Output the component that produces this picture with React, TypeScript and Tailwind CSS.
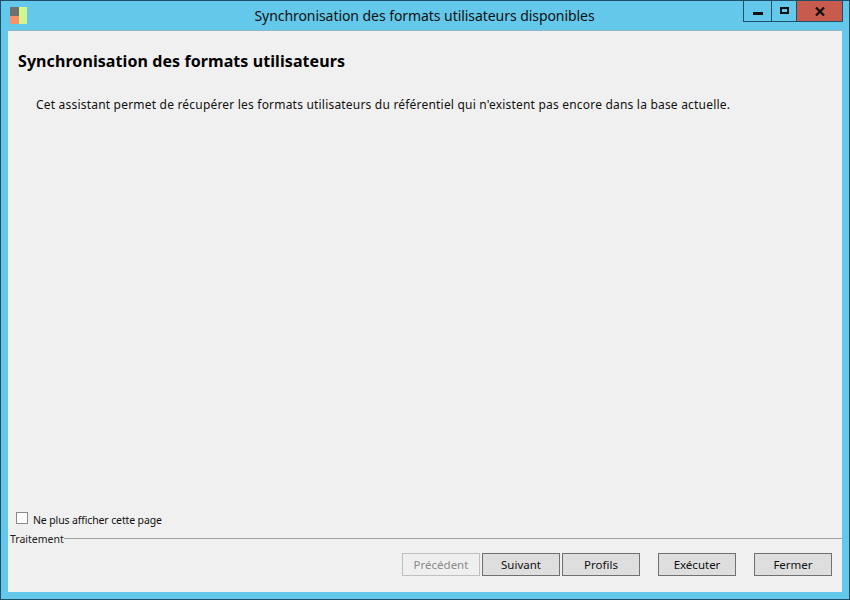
import { ReactNode } from 'react';

function DlgButton({ children, disabled }: { children: ReactNode; disabled?: boolean }) {
  return (
    <button
      className={
        disabled
          ? 'w-[78px] h-[23px] border border-[#bfbfbf] bg-[#efefef] text-[#8a8a8a] text-[11.5px]'
          : 'w-[78px] h-[23px] border border-[#707070] bg-[#dedede] text-[#111111] text-[11.5px]'
      }
    >
      {children}
    </button>
  );
}

export default function App() {
  return (
    <div className="w-[850px] h-[600px] flex flex-col bg-[#63c8ea] border border-[#1d4f6b] font-['Noto_Sans',sans-serif] overflow-hidden">
      {/* title bar */}
      <div className="relative h-[29px] shrink-0 flex items-center justify-center">
        <svg className="absolute left-[9px] top-[6px]" width="17" height="17" viewBox="0 0 17 17">
          <rect x="0" y="0" width="9" height="9" fill="#6f6f6f" />
          <rect x="0" y="9" width="9" height="8" fill="#f79268" />
          <rect x="9" y="0" width="8" height="17" fill="#d3f58e" />
        </svg>
        <span className="text-sm text-[#111111] tracking-[-0.06px] pr-[1px]">Synchronisation des formats utilisateurs disponibles</span>
        <div className="absolute left-[742px] top-[-1px] flex h-[22px] border border-[#1d4f6b] border-t-0">
          <div className="w-[28px] flex items-center justify-center border-r border-[#1d4f6b]">
            <div className="w-[10px] h-[3px] bg-[#111111] mt-[6px]" />
          </div>
          <div className="w-[25px] flex items-center justify-center border-r border-[#1d4f6b]">
            <div className="w-[9px] h-[7px] border-2 border-[#111111]" />
          </div>
          <div className="w-[45px] flex items-center justify-center bg-[#c75b4e]">
            <svg width="10" height="9" viewBox="0 0 10 9" className="mt-[1px]">
              <path d="M1 0.5 L9 8.5 M9 0.5 L1 8.5" stroke="#111111" strokeWidth="2.2" fill="none" />
            </svg>
          </div>
        </div>
      </div>

      {/* content */}
      <div className="flex-1 mx-[7px] mb-[7px] bg-[#f0f0f0] border-t border-[#8fb5c9] flex flex-col min-h-0">
        <div className="flex-1 flex flex-col pl-[10px] pt-[19px]">
          <h1 className="text-[16px] leading-[22px] font-bold text-black tracking-[0.08px]">Synchronisation des formats utilisateurs</h1>
          <p className="mt-[25px] ml-[18px] text-xs leading-[16px] text-[#111111] tracking-[0.2px]">
            Cet assistant permet de récupérer les formats utilisateurs du référentiel qui n'existent pas encore dans la base actuelle.
          </p>
        </div>
        <label className="flex items-start gap-[5px] pl-[8px] h-[16px] mb-[3px]">
          <span className="w-[12px] h-[12px] border border-[#8a8a8a] bg-white" />
          <span className="text-[10.5px] leading-[16px] mt-[-1px] pt-[1px] text-[#111111] tracking-[-0.13px]">Ne plus afficher cette page</span>
        </label>
        <div className="flex items-center h-[14px] pl-[2px]">
          <span className="text-[10.5px] leading-[14px] pt-[1px] text-[#222222]">Traitement</span>
          <div className="flex-1 border-t border-[#a0a0a0]" />
        </div>
        <div className="flex justify-end pt-[8px] pr-[10px] pb-[16px]">
          <div className="flex gap-[2px]">
            <DlgButton disabled>Précédent</DlgButton>
            <DlgButton>Suivant</DlgButton>
            <DlgButton>Profils</DlgButton>
          </div>
          <div className="ml-[18px] flex gap-[18px]">
            <DlgButton>Exécuter</DlgButton>
            <DlgButton>Fermer</DlgButton>
          </div>
        </div>
      </div>
    </div>
  );
}
